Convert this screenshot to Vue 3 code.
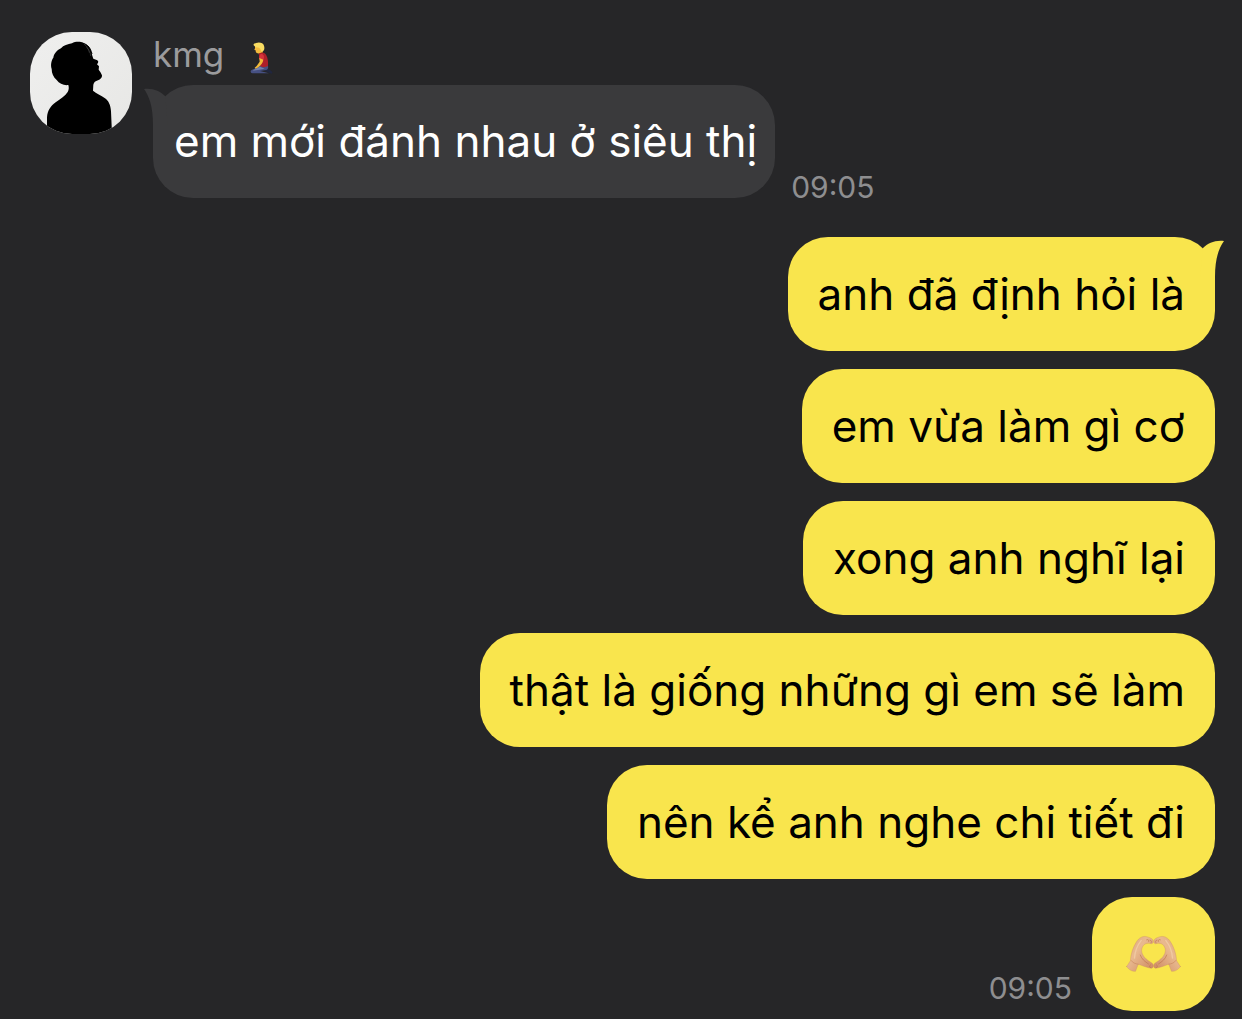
<template>
  <main class="chat">
    <!-- RECEIVED -->
    <section class="received">
      <svg class="avatar" viewBox="6 6 306 306" role="img" aria-label="kmg">
        <path
          d="M57 312L57 262C59 241 67 229 83 217C98 206 112 197 119 186C123 179 123 172 121 165C108 167 94 161 86 150C76 142 71 130 71 117C67 105 70 91 76 83C78 70 88 60 99 55C106 46 120 42 132 40C143 34 160 34 170 41C182 45 190 58 191 71L196 86L206 90C213 93 211 98 207 103L213 109L212 119L217 126L222 136C223 143 217 149 210 151C202 153 198 157 196 164L195 182C205 191 219 195 231 205C242 213 248 225 249 244L252 312Z"
        />
        <path d="M150 39C174 37 187 50 192 72M158 42C177 45 186 59 190 75M196 92L203 99" fill="none" stroke="#000" stroke-width="3" />
        <path d="M168 42C178 50 182 58 184 68M176 52C184 60 187 68 188 78" fill="none" stroke="#777" stroke-width="1" />
      </svg>

      <div class="body">
        <h1 class="name">
          kmg
          <svg class="kneeling" viewBox="0 0 72 96" aria-hidden="true">
            <path fill="#20263f" d="M44 78L54 79 67 90 66 95 58 93 44 86Z" />
            <path fill="#465083" d="M27 70L53 69C57 78 53 84 44 85L30 87 57 94H7C1 93 0 86 6 83L24 75Z" />
            <path fill="#7480aa" d="M30 74C23 77 15 81 8 86L24 84 44 80Z" />
            <path fill="#c98d28" d="M23 26H38V38L27 39Z" />
            <path fill="#ad1f2a" d="M27 34C32 30 44 31 48 38C54 48 55 60 54 72C46 77 36 76 29 72L33 57 27 49Z" />
            <path fill="#d6343b" d="M32 36C40 34 44 42 41 51L37 58 27 51C28 45 28 39 32 36Z" />
            <path fill="#f2ba38" d="M28 48L40 53C39 63 32 70 25 76L17 80 14 77 20 72 29 59Z" />
            <path fill="#f3bb3e" d="M15 12L35 10 38 23C37 32 29 35 20 33L17 29 18 26 13 23 15 19Z" />
            <path fill="#f8dc62" d="M11 10C9 4 15 5 18 3C27-1 40 2 42 11C45 20 42 28 35 30L31 21 27 17C20 17 14 15 11 10Z" />
          </svg>
        </h1>
        <div class="line">
          <p class="bubble gray">
            <svg class="tail" viewBox="0 0 24 40" aria-hidden="true">
              <path d="M0 4C9 3 16 6 21 11L24 40H9C9 21 5 11 0 4Z" />
            </svg>
            em mới đánh nhau ở siêu thị
          </p>
          <time class="time">09:05</time>
        </div>
      </div>
    </section>

    <!-- SENT -->
    <section class="sent">
      <p v-for="(text, i) in messages" :key="i" class="bubble yellow">
        <svg v-if="i === 0" class="tail" viewBox="0 0 24 40" aria-hidden="true">
          <path d="M24 4C15 3 8 6 3 11L0 40H15C15 21 19 11 24 4Z" />
        </svg>
        {{ text }}
      </p>
      <div class="line last">
        <time class="time">09:05</time>
        <p class="bubble yellow emoji">
          <svg class="hands" viewBox="0 0 162 108" role="img" aria-label="heart hands">
            <defs>
              <linearGradient id="skin" x1="0" y1="0" x2="1" y2="1">
                <stop offset="0" stop-color="#dda578" />
                <stop offset=".4" stop-color="#e9b98f" />
                <stop offset="1" stop-color="#cc8860" />
              </linearGradient>
            </defs>
            <g id="hand" stroke-linejoin="round" stroke-linecap="round">
              <path
                fill="url(#skin)"
                stroke="#c98a62"
                stroke-width="1"
                d="M2 91L13 74C14 54 21 33 31 18C38 6 50 0 61 3C70 5 79 9 80 15C81 22 77 25 71 23C57 20 47 29 46 43C46 57 57 67 66 74L77 81C83 86 81 96 74 96C61 94 47 88 36 84L28 105C18 106 9 101 2 91Z"
              />
              <path fill="none" stroke="#bd7551" stroke-width="2" d="M61 12C65 10 68 13 67 17M71 13C75 13 76 18 74 21M42 57C46 69 56 77 66 83M72 86C68 88 69 93 72 94" />
              <path fill="none" stroke="#c98a62" stroke-width="2" d="M15 73C20 80 27 83 36 84" />
              <path fill="none" stroke="#f0c9a2" stroke-width="4" d="M45 14C33 29 26 49 25 66" />
            </g>
            <use href="#hand" transform="matrix(-1 0 0 1 162 0)" />
          </svg>
        </p>
      </div>
    </section>
  </main>
</template>

<script setup>
const messages = [
  'anh đã định hỏi là',
  'em vừa làm gì cơ',
  'xong anh nghĩ lại',
  'thật là giống những gì em sẽ làm',
  'nên kể anh nghe chi tiết đi',
]
</script>

<style>
body {
  background: #262628;
}
</style>

<style scoped>
.chat {
  box-sizing: border-box;
  padding: 32px 27px 8px 30px;
  font-family: Inter, "Noto Sans", sans-serif;
}

.received {
  display: flex;
  gap: 21px;
}

.avatar {
  width: 102px;
  height: 102px;
  flex: none;
  border-radius: 42px;
  background: linear-gradient(135deg, #efefee, #e7e7e5);
}

.name {
  display: flex;
  align-items: center;
  gap: 26px;
  margin: 0 0 9px;
  font-size: 35px;
  font-weight: 400;
  line-height: 44px;
  color: #9b9b9d;
}

.kneeling {
  width: 24px;
  height: 32px;
  margin-top: 8px;
}

.line {
  display: flex;
  align-items: flex-end;
  gap: 16px;
}

.bubble {
  position: relative;
  margin: 0;
  padding: 30px;
  border-radius: 40px;
  font-size: 44px;
  line-height: 54px;
}

.gray {
  padding: 29px 18px 30px 21px;
  background: #3a3a3c;
  color: #fff;
}

.yellow {
  background: #f9e54d;
  color: #000;
}

/* little horn on the bubble's upper corner */
.tail {
  position: absolute;
  top: 0;
  width: 24px;
  height: 40px;
}

.gray .tail {
  left: -9px;
  fill: #3a3a3c;
}

.yellow .tail {
  right: -9px;
  fill: #f9e54d;
}

.time {
  font-size: 30px;
  line-height: 22px;
  color: #8e8e90;
}

.sent {
  display: flex;
  flex-direction: column;
  align-items: flex-end;
  gap: 18px;
  margin-top: 39px;
}

.last {
  gap: 20px;
}

.last .time {
  padding-bottom: 12px;
}

.emoji {
  display: flex;
  align-items: center;
  height: 54px;
  padding: 30px 34px;
}

.hands {
  width: 55px;
  height: 38px;
}
</style>
